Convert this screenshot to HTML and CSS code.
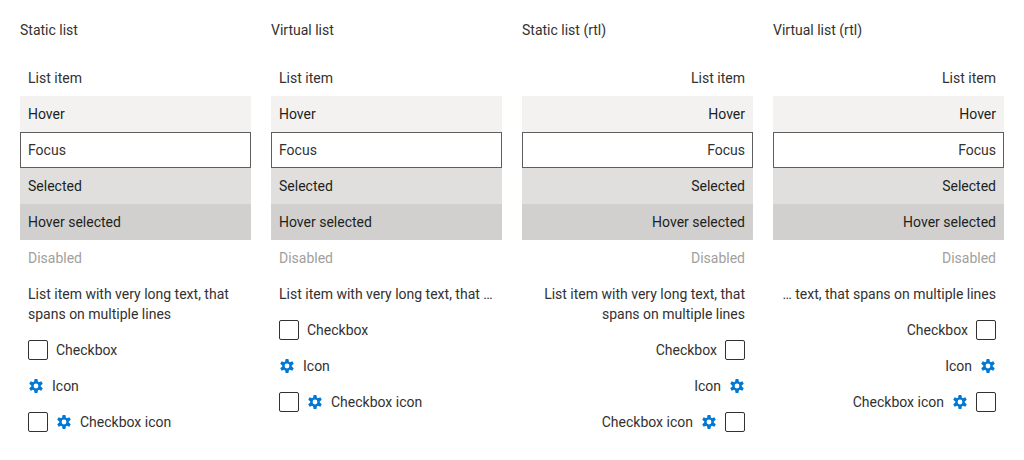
FILE: index.html
```html
<!DOCTYPE html>
<html lang="en">
<head>
<meta charset="utf-8">
<meta name="viewport" content="width=device-width, initial-scale=1">
<title>List states</title>
<link rel="stylesheet" href="styles.css">
</head>
<body>
<svg class="sprite" aria-hidden="true">
  <symbol id="gear" viewBox="0 0 16 16">
    <path fill-rule="evenodd" d="M6.1 3.6 6.6 1H9.4L9.9 3.6 10.86 4.15 13.36 3.29 14.76 5.71 12.76 7.45V8.55L14.76 10.29 13.36 12.71 10.86 11.85 9.9 12.4 9.4 15H6.6L6.1 12.4 5.14 11.85 2.64 12.71 1.24 10.29 3.24 8.55V7.45L1.24 5.71 2.64 3.29 5.14 4.15zM8 5.6a2.4 2.4 0 1 0 0 4.8 2.4 2.4 0 0 0 0-4.8z"/>
  </symbol>
</svg>
<main class="columns">
  <section class="column">
    <h2 class="title">Static list</h2>
    <ul class="list">
      <li class="item">List item</li>
      <li class="item hover">Hover</li>
      <li class="item focus">Focus</li>
      <li class="item selected">Selected</li>
      <li class="item hover-selected">Hover selected</li>
      <li class="item disabled">Disabled</li>
      <li class="item">List item with very long text, that spans on multiple lines</li>
      <li><label class="item row"><input class="check" type="checkbox"><span>Checkbox</span></label></li>
      <li class="item row"><svg class="icon"><use href="#gear"/></svg><span>Icon</span></li>
      <li><label class="item row"><input class="check" type="checkbox"><svg class="icon"><use href="#gear"/></svg><span>Checkbox icon</span></label></li>
    </ul>
  </section>
  <section class="column">
    <h2 class="title">Virtual list</h2>
    <ul class="list virtual">
      <li class="item">List item</li>
      <li class="item hover">Hover</li>
      <li class="item focus">Focus</li>
      <li class="item selected">Selected</li>
      <li class="item hover-selected">Hover selected</li>
      <li class="item disabled">Disabled</li>
      <li class="item"><div class="clip">List item with very long text, that spans on multiple lines</div></li>
      <li><label class="item row"><input class="check" type="checkbox"><span>Checkbox</span></label></li>
      <li class="item row"><svg class="icon"><use href="#gear"/></svg><span>Icon</span></li>
      <li><label class="item row"><input class="check" type="checkbox"><svg class="icon"><use href="#gear"/></svg><span>Checkbox icon</span></label></li>
    </ul>
  </section>
  <section class="column">
    <h2 class="title">Static list (rtl)</h2>
    <ul class="list" dir="rtl">
      <li class="item">List item</li>
      <li class="item hover">Hover</li>
      <li class="item focus">Focus</li>
      <li class="item selected">Selected</li>
      <li class="item hover-selected">Hover selected</li>
      <li class="item disabled">Disabled</li>
      <li class="item">List item with very long text, that spans on multiple lines</li>
      <li><label class="item row"><input class="check" type="checkbox"><span>Checkbox</span></label></li>
      <li class="item row"><svg class="icon"><use href="#gear"/></svg><span>Icon</span></li>
      <li><label class="item row"><input class="check" type="checkbox"><svg class="icon"><use href="#gear"/></svg><span>Checkbox icon</span></label></li>
    </ul>
  </section>
  <section class="column">
    <h2 class="title">Virtual list (rtl)</h2>
    <ul class="list virtual" dir="rtl">
      <li class="item">List item</li>
      <li class="item hover">Hover</li>
      <li class="item focus">Focus</li>
      <li class="item selected">Selected</li>
      <li class="item hover-selected">Hover selected</li>
      <li class="item disabled">Disabled</li>
      <li class="item"><div class="clip">List item with very long text, that spans on multiple lines</div></li>
      <li><label class="item row"><input class="check" type="checkbox"><span>Checkbox</span></label></li>
      <li class="item row"><svg class="icon"><use href="#gear"/></svg><span>Icon</span></li>
      <li><label class="item row"><input class="check" type="checkbox"><svg class="icon"><use href="#gear"/></svg><span>Checkbox icon</span></label></li>
    </ul>
  </section>
</main>
</body>
</html>
```
FILE: styles.css
```css
* {
  box-sizing: border-box;
}

body {
  margin: 0;
  background: #fff;
  color: #323130;
  font: 14px/20px Roboto, sans-serif;
}

.sprite {
  display: none;
}

.columns {
  display: grid;
  grid-template-columns: repeat(4, minmax(0, 1fr));
  gap: 20px;
  padding: 20px;
}

.column {
  display: flex;
  flex-direction: column;
  gap: 20px;
}

.title {
  margin: 0;
  font-size: 14px;
  font-weight: 400;
}

.list {
  margin: 0;
  padding: 0;
  list-style: none;
}

.item {
  padding: 8px;
}

.row {
  display: flex;
  align-items: center;
  gap: 8px;
}

.clip {
  overflow: hidden;
  white-space: nowrap;
  text-overflow: ellipsis;
}

.hover {
  background: #f3f2f1;
  color: #201f1e;
}

.focus {
  box-shadow: inset 0 0 0 1px #605e5c;
}

.selected {
  background: #e0dfde;
  color: #201f1e;
}

.hover-selected {
  background: #d2d0ce;
  color: #201f1e;
}

.disabled {
  color: #a19f9d;
}

.check {
  appearance: none;
  flex: none;
  width: 20px;
  height: 20px;
  margin: 0;
  border: 1px solid #323130;
  border-radius: 2px;
  background: #fff;
}

.check:checked {
  border-color: #0078d4;
  background: #0078d4;
}

.icon {
  flex: none;
  width: 16px;
  height: 16px;
  fill: #0078d4;
}
```
